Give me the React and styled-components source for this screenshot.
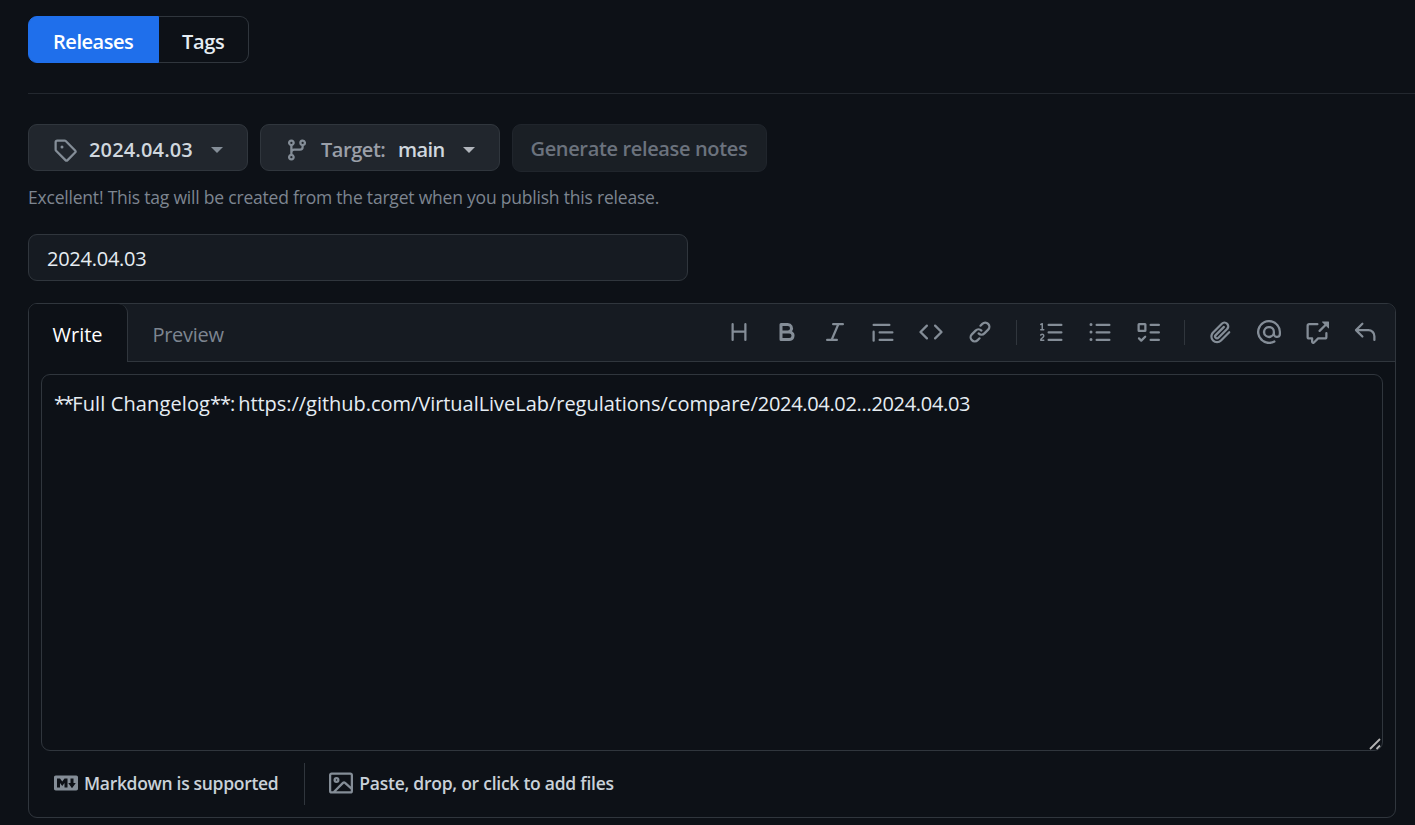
import React from "react";
import styled, { createGlobalStyle } from "styled-components";

const Global = createGlobalStyle`
  * { box-sizing: border-box; }
  body { margin: 0; background: #0d1117; overflow: hidden; }
  button, input { font: inherit; margin: 0; }
`;

const Page = styled.main`
  height: 825px;
  padding: 16px 0 0 28px;
  background: #0d1117;
  color: #e6edf3;
  font-family: "Open Sans", "Noto Sans", sans-serif;
  font-size: 20px;
  line-height: 30px;
  overflow: hidden;
`;

const SubNav = styled.nav`
  display: flex;
  height: 47px;
`;

const NavItem = styled.a`
  display: flex;
  align-items: center;
  padding: 4px 0 0 ${(p) => (p.$active ? 24 : 23)}px;
  width: ${(p) => (p.$active ? 131 : 90)}px;
  border: 1px solid ${(p) => (p.$active ? "#1f6feb" : "#30363d")};
  border-left-width: ${(p) => (p.$active ? 1 : 0)}px;
  border-radius: ${(p) => (p.$active ? "9px 0 0 9px" : "0 9px 9px 0")};
  background: ${(p) => (p.$active ? "#1f6feb" : "transparent")};
  color: ${(p) => (p.$active ? "#ffffff" : "#e6edf3")};
  font-weight: 600;
`;

const Label = styled.span`
  white-space: pre;
  letter-spacing: ${(p) => p.$track || 0}px;
`;

const Divider = styled.hr`
  margin: 30px 0;
  border: 0;
  height: 1px;
  background: #23282f;
`;

const Row = styled.div`
  display: flex;
  align-items: flex-start;
  gap: 12px;
`;

const Button = styled.button`
  display: flex;
  align-items: center;
  width: ${(p) => p.$width}px;
  height: ${(p) => (p.disabled ? 48 : 47)}px;
  padding: ${(p) => (p.disabled ? "1px 0 0 17.5px" : "4px 0 0 24px")};
  border: 1px solid ${(p) => (p.disabled ? "#20252c" : "#30363d")};
  border-radius: 9px;
  background: ${(p) => (p.disabled ? "#1a1f25" : "#21262d")};
  color: ${(p) => (p.disabled ? "#6b727d" : "#d0d7de")};
  font-weight: 600;
  text-align: left;
`;

const Value = styled(Label)`
  width: ${(p) => p.$width}px;
`;

const Muted = styled(Value)`
  color: #9a9fa8;
`;

const Caret = styled.span`
  border: 6px solid transparent;
  border-top-color: ${(p) => p.$color};
  border-bottom: 0;
`;

const Hint = styled.p`
  margin: 10px 0 22px;
  color: #7d8590;
  font-size: 17.5px;
  line-height: 30px;
`;

const TitleInput = styled.input`
  display: block;
  width: 660px;
  height: 47px;
  padding: 1px 18px 0;
  border: 1px solid #30363d;
  border-radius: 9px;
  background: #161b22;
  color: #e6edf3;
  letter-spacing: -0.25px;
  outline: 0;
`;

const Editor = styled.section`
  display: flex;
  flex-direction: column;
  width: 1368px;
  height: 515px;
  margin-top: 22px;
  border: 1px solid #30363d;
  border-radius: 9px;
  overflow: hidden;
`;

const EditorHeader = styled.header`
  display: flex;
  height: 58px;
  flex: none;
  background: #161b22;
  box-shadow: inset 0 -1px #30363d;
`;

const Tab = styled.div`
  width: ${(p) => (p.$active ? 99 : 180)}px;
  padding: 16px 0 0 ${(p) => (p.$active ? 23.5 : 24.5)}px;
  border-right: ${(p) => (p.$active ? "1px solid #30363d" : "0")};
  border-radius: 0 9px 0 0;
  background: ${(p) => (p.$active ? "#0d1117" : "transparent")};
  color: ${(p) => (p.$active ? "#ffffff" : "#7d8590")};
`;

const Toolbar = styled.div`
  display: flex;
  align-items: center;
  margin-left: auto;
  padding: 0 6px 2px 0;
  color: #848d97;
`;

const Tool = styled.span`
  display: flex;
  justify-content: center;
  width: 48.2px;
`;

const Separator = styled.i`
  width: 1px;
  height: ${(p) => p.$height}px;
  margin: ${(p) => p.$margin};
  background: #30363d;
`;

const Svg = styled.svg`
  display: block;
  flex: none;
  width: 24px;
  height: 24px;
  margin: ${(p) => p.$margin || 0};
  fill: ${(p) => p.$color || "currentColor"};
`;

const Notes = styled.div`
  position: relative;
  flex: none;
  width: 1342px;
  height: 377px;
  margin: 12px 12px 0;
  padding: 13px 12px;
  border: 1px solid #30363d;
  border-radius: 9px;
  color: #e6edf3;
  line-height: 31px;
`;

const Grip = styled.svg`
  position: absolute;
  right: 1px;
  bottom: 0;
  width: 12px;
  height: 12px;
  fill: none;
  stroke: #b4b4b4;
  stroke-width: 1.8;
`;

const Footer = styled.footer`
  display: flex;
  align-items: center;
  height: 65px;
  padding-left: 25px;
  color: #c9d1d9;
  font-size: 17.5px;
  font-weight: 600;
`;

const FooterItem = styled.div`
  display: flex;
  align-items: center;
  padding-bottom: 2px;
`;

const paths = {
  heading:
    "M3.75 2a.75.75 0 0 1 .75.75V7h7V2.75a.75.75 0 0 1 1.5 0v10.5a.75.75 0 0 1-1.5 0V8.5h-7v4.75a.75.75 0 0 1-1.5 0V2.75A.75.75 0 0 1 3.75 2Z",
  bold: "M4 2h4.5a3.501 3.501 0 0 1 2.852 5.53A3.499 3.499 0 0 1 9.5 14H4a1 1 0 0 1-1-1V3a1 1 0 0 1 1-1Zm1 7v3h4.5a1.5 1.5 0 0 0 0-3Zm3.5-2a1.5 1.5 0 0 0 0-3H5v3Z",
  italic:
    "M6 2.75A.75.75 0 0 1 6.75 2h6.5a.75.75 0 0 1 0 1.5h-2.505l-3.858 9H9.25a.75.75 0 0 1 0 1.5h-6.5a.75.75 0 0 1 0-1.5h2.505l3.858-9H6.75A.75.75 0 0 1 6 2.75Z",
  quote:
    "M1.75 2.5h10.5a.75.75 0 0 1 0 1.5H1.75a.75.75 0 0 1 0-1.5Zm4 5h8.5a.75.75 0 0 1 0 1.5h-8.5a.75.75 0 0 1 0-1.5Zm0 5h8.5a.75.75 0 0 1 0 1.5h-8.5a.75.75 0 0 1 0-1.5ZM2.5 7.75v6a.75.75 0 0 1-1.5 0v-6a.75.75 0 0 1 1.5 0Z",
  code: "m11.28 3.22 4.25 4.25a.75.75 0 0 1 0 1.06l-4.25 4.25a.749.749 0 0 1-1.275-.326.749.749 0 0 1 .215-.734L13.94 8l-3.72-3.72a.749.749 0 0 1 .326-1.275.749.749 0 0 1 .734.215Zm-6.56 0a.751.751 0 0 1 1.042.018.751.751 0 0 1 .018 1.042L2.06 8l3.72 3.72a.749.749 0 0 1-.326 1.275.749.749 0 0 1-.734-.215L.47 8.53a.75.75 0 0 1 0-1.06Z",
  link: "m7.775 3.275 1.25-1.25a3.5 3.5 0 1 1 4.95 4.95l-2.5 2.5a3.5 3.5 0 0 1-4.95 0 .751.751 0 0 1 .018-1.042.751.751 0 0 1 1.042-.018 1.998 1.998 0 0 0 2.83 0l2.5-2.5a2.002 2.002 0 0 0-2.83-2.83l-1.25 1.25a.751.751 0 0 1-1.042-.018.751.751 0 0 1-.018-1.042Zm-4.69 9.64a1.998 1.998 0 0 0 2.83 0l1.25-1.25a.751.751 0 0 1 1.042.018.751.751 0 0 1 .018 1.042l-1.25 1.25a3.5 3.5 0 1 1-4.95-4.95l2.5-2.5a3.5 3.5 0 0 1 4.95 0 .751.751 0 0 1-.018 1.042.751.751 0 0 1-1.042.018 1.998 1.998 0 0 0-2.83 0l-2.5 2.5a1.998 1.998 0 0 0 0 2.83Z",
  ordered:
    "M5 3.25a.75.75 0 0 1 .75-.75h8.5a.75.75 0 0 1 0 1.5h-8.5A.75.75 0 0 1 5 3.25Zm0 5a.75.75 0 0 1 .75-.75h8.5a.75.75 0 0 1 0 1.5h-8.5A.75.75 0 0 1 5 8.25Zm0 5a.75.75 0 0 1 .75-.75h8.5a.75.75 0 0 1 0 1.5h-8.5a.75.75 0 0 1-.75-.75ZM.924 10.32a.5.5 0 0 1-.851-.525l.001-.001.001-.002.002-.004.007-.011c.097-.144.215-.273.348-.384.228-.19.588-.392 1.068-.392.468 0 .858.181 1.126.484.259.294.377.673.377 1.038 0 .987-.686 1.495-1.156 1.845l-.047.035c-.303.225-.522.4-.654.597h1.357a.5.5 0 0 1 0 1H.5a.5.5 0 0 1-.5-.5c0-1.005.692-1.52 1.167-1.875l.035-.025c.531-.396.8-.625.8-1.078a.57.57 0 0 0-.128-.376C1.806 10.068 1.695 10 1.5 10a.658.658 0 0 0-.429.163.835.835 0 0 0-.144.153ZM2.003 2.5V6h.503a.5.5 0 0 1 0 1H.5a.5.5 0 0 1 0-1h.503V3.308l-.28.14a.5.5 0 0 1-.446-.895l1.003-.5a.5.5 0 0 1 .723.447Z",
  unordered:
    "M5.75 2.5h8.5a.75.75 0 0 1 0 1.5h-8.5a.75.75 0 0 1 0-1.5Zm0 5h8.5a.75.75 0 0 1 0 1.5h-8.5a.75.75 0 0 1 0-1.5Zm0 5h8.5a.75.75 0 0 1 0 1.5h-8.5a.75.75 0 0 1 0-1.5ZM2 14a1 1 0 1 1 0-2 1 1 0 0 1 0 2Zm1-6a1 1 0 1 1-2 0 1 1 0 0 1 2 0ZM2 4a1 1 0 1 1 0-2 1 1 0 0 1 0 2Z",
  tasks:
    "M2 2h4a1 1 0 0 1 1 1v4a1 1 0 0 1-1 1H2a1 1 0 0 1-1-1V3a1 1 0 0 1 1-1Zm4.655 8.595a.75.75 0 0 1 0 1.06L4.03 14.28a.75.75 0 0 1-1.06 0l-1.5-1.5a.749.749 0 0 1 .326-1.275.749.749 0 0 1 .734.215l.97.97 2.095-2.095a.75.75 0 0 1 1.06 0ZM9.75 2.5h5.5a.75.75 0 0 1 0 1.5h-5.5a.75.75 0 0 1 0-1.5Zm0 5h5.5a.75.75 0 0 1 0 1.5h-5.5a.75.75 0 0 1 0-1.5Zm0 5h5.5a.75.75 0 0 1 0 1.5h-5.5a.75.75 0 0 1 0-1.5Zm-7.25-9v3h3v-3Z",
  clip: "M12.212 3.02a1.753 1.753 0 0 0-2.478.003l-5.83 5.83a3.007 3.007 0 0 0-.88 2.127c0 .795.315 1.551.88 2.116.567.567 1.333.89 2.126.89.79 0 1.548-.321 2.116-.89l5.48-5.48a.75.75 0 0 1 1.061 1.06l-5.48 5.48a4.492 4.492 0 0 1-3.177 1.33c-1.2 0-2.345-.487-3.187-1.33a4.483 4.483 0 0 1-1.32-3.177c0-1.195.475-2.341 1.32-3.186l5.83-5.83a3.25 3.25 0 0 1 5.553 2.297c0 .863-.343 1.691-.953 2.301L7.439 12.39c-.375.377-.884.59-1.416.593a1.998 1.998 0 0 1-1.412-.593 1.992 1.992 0 0 1 0-2.828l5.48-5.48a.751.751 0 0 1 1.042.018.751.751 0 0 1 .018 1.042l-5.48 5.48a.492.492 0 0 0 0 .707.499.499 0 0 0 .352.154.51.51 0 0 0 .356-.154l5.833-5.827a1.755 1.755 0 0 0 0-2.481Z",
  mention:
    "M4.75 2.37a6.501 6.501 0 0 0 6.5 11.26.75.75 0 0 1 .75 1.298A7.999 7.999 0 0 1 .989 4.148 8 8 0 0 1 16 7.75v1.5a2.75 2.75 0 0 1-5.072 1.475 3.999 3.999 0 0 1-6.65-4.19A4 4 0 0 1 12 8v1.25a1.25 1.25 0 0 0 2.5 0V7.867a6.5 6.5 0 0 0-9.75-5.496ZM10.5 8a2.5 2.5 0 1 0-5 0 2.5 2.5 0 0 0 5 0Z",
  crossRef:
    "M2.75 3.5a.25.25 0 0 0-.25.25v7.5c0 .138.112.25.25.25h2a.75.75 0 0 1 .75.75v2.19l2.72-2.72a.749.749 0 0 1 .53-.22h4.5a.25.25 0 0 0 .25-.25v-2.5a.75.75 0 0 1 1.5 0v2.5A1.75 1.75 0 0 1 13.25 13H9.06l-2.573 2.573A1.458 1.458 0 0 1 4 14.543V13H2.75A1.75 1.75 0 0 1 1 11.25v-7.5C1 2.784 1.784 2 2.75 2h5.5a.75.75 0 0 1 0 1.5ZM16 1.25v4.146a.25.25 0 0 1-.427.177L14.03 4.03l-3.75 3.75a.749.749 0 0 1-1.275-.326.749.749 0 0 1 .215-.734l3.75-3.75-1.543-1.543A.25.25 0 0 1 11.604 1h4.146a.25.25 0 0 1 .25.25Z",
  reply:
    "M6.78 1.97a.75.75 0 0 1 0 1.06L3.81 6h6.44A4.75 4.75 0 0 1 15 10.75v2.5a.75.75 0 0 1-1.5 0v-2.5a3.25 3.25 0 0 0-3.25-3.25H3.81l2.97 2.97a.749.749 0 0 1-.326 1.275.749.749 0 0 1-.734-.215L1.47 7.28a.75.75 0 0 1 0-1.06l4.25-4.25a.75.75 0 0 1 1.06 0Z",
  tag: "M1 7.775V2.75C1 1.784 1.784 1 2.75 1h5.025c.464 0 .91.184 1.238.513l6.25 6.25a1.75 1.75 0 0 1 0 2.474l-5.026 5.026a1.75 1.75 0 0 1-2.474 0l-6.25-6.25A1.752 1.752 0 0 1 1 7.775Zm1.5 0c0 .066.026.13.073.177l6.25 6.25a.25.25 0 0 0 .354 0l5.025-5.025a.25.25 0 0 0 0-.354l-6.25-6.25a.25.25 0 0 0-.177-.073H2.75a.25.25 0 0 0-.25.25ZM6 5a1 1 0 1 1 0 2 1 1 0 0 1 0-2Z",
  branch:
    "M9.5 3.25a2.25 2.25 0 1 1 3 2.122V6A2.5 2.5 0 0 1 10 8.5H6a1 1 0 0 0-1 1v1.128a2.251 2.251 0 1 1-1.5 0V5.372a2.25 2.25 0 1 1 1.5 0v1.836A2.493 2.493 0 0 1 6 7h4a1 1 0 0 0 1-1v-.628A2.25 2.25 0 0 1 9.5 3.25Zm-6 0a.75.75 0 1 0 1.5 0 .75.75 0 0 0-1.5 0Zm8.25-.75a.75.75 0 1 0 0 1.5.75.75 0 0 0 0-1.5ZM4.25 12a.75.75 0 1 0 0 1.5.75.75 0 0 0 0-1.5Z",
  markdown:
    "M14.85 3c.63 0 1.15.52 1.14 1.15v7.7c0 .63-.51 1.15-1.15 1.15H1.15C.52 13 0 12.48 0 11.84V4.15C0 3.52.52 3 1.15 3ZM9 11V5H7L5.5 7 4 5H2v6h2V8l1.5 1.92L7 8v3Zm2.99.5L14.5 8H13V5h-2v3H9.5Z",
  image:
    "M16 13.25A1.75 1.75 0 0 1 14.25 15H1.75A1.75 1.75 0 0 1 0 13.25V2.75C0 1.784.784 1 1.75 1h12.5c.966 0 1.75.784 1.75 1.75ZM1.75 2.5a.25.25 0 0 0-.25.25v10.5c0 .138.112.25.25.25h.94l.03-.03 6.077-6.078a1.75 1.75 0 0 1 2.412-.06L14.5 10.31V2.75a.25.25 0 0 0-.25-.25Zm12.5 11a.25.25 0 0 0 .25-.25v-.917l-4.298-3.889a.25.25 0 0 0-.344.009L4.81 13.5ZM7 6a2 2 0 1 1-3.999.001A2 2 0 0 1 7 6ZM5.5 6a.5.5 0 1 0-1 0 .5.5 0 0 0 1 0Z",
};

const Icon = ({ name, color, margin }) => (
  <Svg viewBox="0 0 16 16" $color={color} $margin={margin} aria-hidden="true">
    <path d={paths[name]} />
  </Svg>
);

const groups = [
  ["heading", "bold", "italic", "quote", "code", "link"],
  ["ordered", "unordered", "tasks"],
  ["clip", "mention", "crossRef", "reply"],
];

export default function App() {
  return (
    <>
      <Global />
      <Page>
        <SubNav>
          <NavItem $active>
            <Label $track={-0.45}>Releases</Label>
          </NavItem>
          <NavItem>
            <Label $track={-0.3}>Tags</Label>
          </NavItem>
        </SubNav>
        <Divider />
        <Row>
          <Button $width={220}>
            <Icon name="tag" color="#848d97" margin="0 12px 0 0" />
            <Value $width={122} $track={0.15}>2024.04.03</Value>
            <Caret $color="#848d97" />
          </Button>
          <Button $width={240}>
            <Icon name="branch" color="#848d97" margin="0 12px 0 0" />
            <Muted $width={77} $track={-0.45}>Target:</Muted>
            <Value $width={65} $track={-0.6}>main</Value>
            <Caret $color="#b1b5bc" />
          </Button>
          <Button $width={255} disabled>
            <Label $track={-0.35}>Generate release notes</Label>
          </Button>
        </Row>
        <Hint>
          <Label $track={-0.205}>
            Excellent! This tag will be created from the target when you publish this release.
          </Label>
        </Hint>
        <TitleInput defaultValue="2024.04.03" />
        <Editor>
          <EditorHeader>
            <Tab $active>
              <Label>Write</Label>
            </Tab>
            <Tab>
              <Label $track={-0.3}>Preview</Label>
            </Tab>
            <Toolbar>
              {groups.map((group, i) => (
                <React.Fragment key={i}>
                  {i > 0 && <Separator $height={25} $margin="0 11px 0 12px" />}
                  {group.map((name) => (
                    <Tool key={name}>
                      <Icon name={name} />
                    </Tool>
                  ))}
                </React.Fragment>
              ))}
            </Toolbar>
          </EditorHeader>
          <Notes role="textbox" aria-multiline="true">
            <Label $track={-1.9}>**</Label>
            <Label $track={0.12}>Full Changelog</Label>
            <Label $track={-1.1}>{"**: "}</Label>
            <Label $track={-0.035}>https://github.com/VirtualLiveLab/regulations/compare/</Label>
            <Label $track={-0.32}>2024.04.02...2024.04.03</Label>
            <Grip viewBox="0 0 12 12" aria-hidden="true">
              <path d="M1 11 11 1M7.5 11 11 7.5" />
            </Grip>
          </Notes>
          <Footer>
            <FooterItem>
              <Icon name="markdown" color="#848d97" margin="0 6px 0 0" />
              <Label $track={-0.31}>Markdown is supported</Label>
            </FooterItem>
            <Separator $height={42} $margin="0 24px 0 26px" />
            <FooterItem>
              <Icon name="image" color="#848d97" margin="0 6px 0 0" />
              <Label $track={-0.25}>Paste, drop, or click to add files</Label>
            </FooterItem>
          </Footer>
        </Editor>
      </Page>
    </>
  );
}
